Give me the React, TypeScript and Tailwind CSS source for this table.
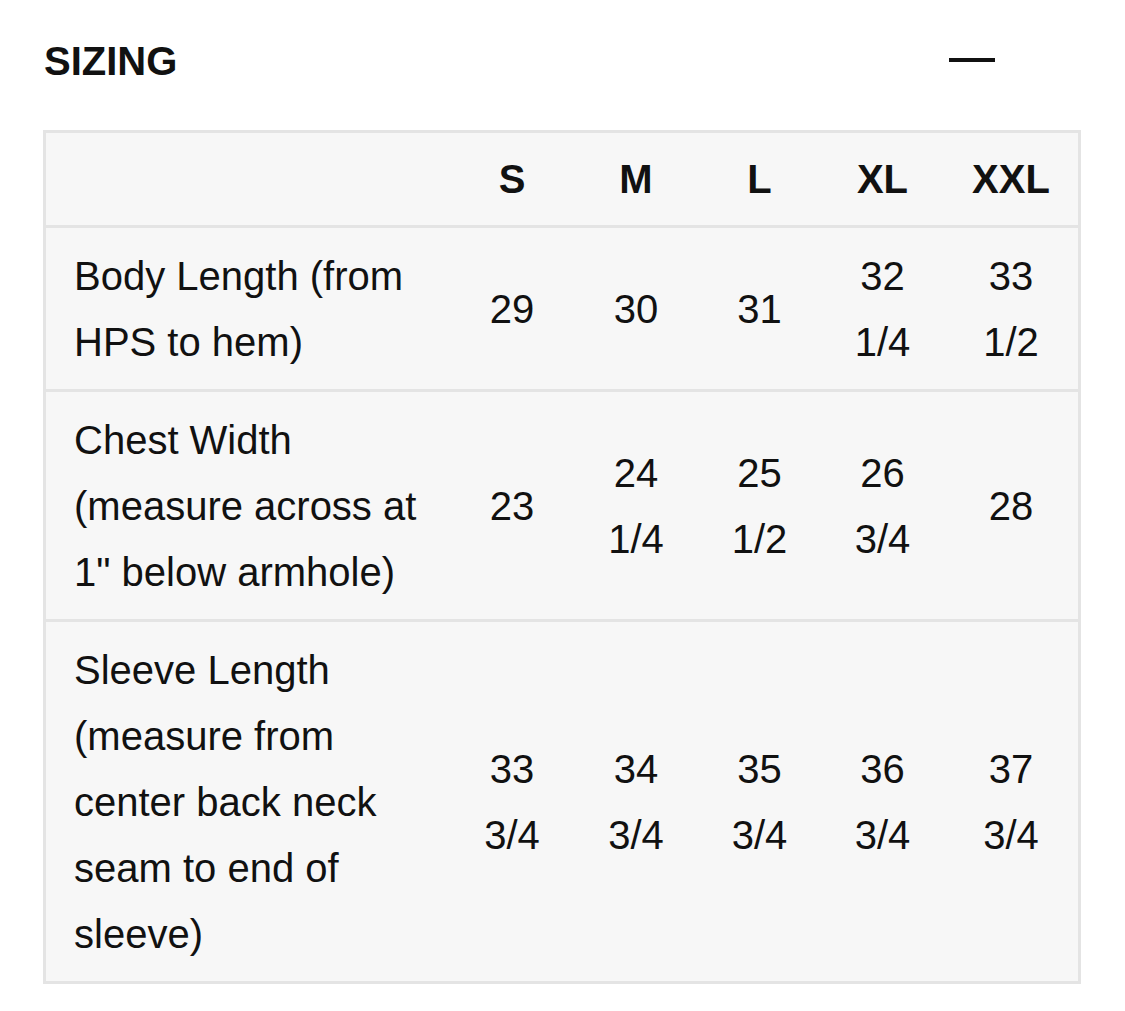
const sizes = ["S", "M", "L", "XL", "XXL"];

const rows = [
  { label: "Body Length (from HPS to hem)", values: ["29", "30", "31", "32 1/4", "33 1/2"] },
  { label: "Chest Width (measure across at 1\" below armhole)", values: ["23", "24 1/4", "25 1/2", "26 3/4", "28"] },
  {
    label: "Sleeve Length (measure from center back neck seam to end of sleeve)",
    values: ["33 3/4", "34 3/4", "35 3/4", "36 3/4", "37 3/4"],
  },
];

const grid = "grid grid-cols-[404px_124px_124px_123px_123px_134px]";

export default function App() {
  return (
    <div className="min-h-screen bg-white pt-[37px] pl-[43px] font-['Liberation_Sans',Arial,Helvetica,sans-serif] text-[#111]">
      <div className="flex w-[1038px] items-center justify-between">
        <h2 className="pl-[1px] text-[40px] font-bold leading-[48px]">SIZING</h2>
        <div className="mr-[86px] mb-[3px] h-[4px] w-[46px] bg-[#111]" />
      </div>

      <div className="mt-[45px] w-[1038px] border-[3px] border-[#e4e4e4] bg-[#f7f7f7]">
        {/* header */}
        <div className={grid}>
          <div />
          {sizes.map((s) => (
            <div key={s} className="py-[13px] text-center text-[40px] font-bold leading-[66px]">
              {s}
            </div>
          ))}
        </div>

        {rows.map((row) => (
          <div key={row.label} className={`${grid} border-t-[3px] border-[#e4e4e4]`}>
            <div className="pt-[15px] pb-[14px] pl-[28px] pr-[20px] text-[40px] leading-[66px]">{row.label}</div>
            {row.values.map((v, i) => (
              <div key={i} className="flex flex-col items-center justify-center pt-[15px] pb-[14px] text-[40px] leading-[66px]">
                {v.split(" ").map((part) => (
                  <span key={part}>{part}</span>
                ))}
              </div>
            ))}
          </div>
        ))}
      </div>
    </div>
  );
}
